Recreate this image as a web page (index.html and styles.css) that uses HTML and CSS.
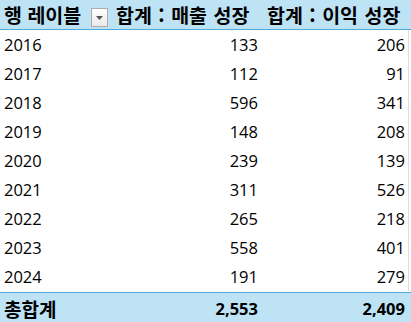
FILE: index.html
```html
<!DOCTYPE html>
<html lang="ko">
<head>
<meta charset="utf-8">
<link rel="stylesheet" href="styles.css">
</head>
<body>
<div class="pivot">
  <div class="row head">
    <div class="cell label">행 레이블<span class="dd"><svg width="7" height="4" viewBox="0 0 7 4"><path d="M0 0H7L3.5 4Z" fill="#555"/></svg></span></div>
    <div class="cell htext">합계 : 매출 성장</div>
    <div class="cell htext">합계 : 이익 성장</div>
  </div>
  <div class="row data"><div class="cell">2016</div><div class="cell num">133</div><div class="cell num">206</div></div>
  <div class="row data"><div class="cell">2017</div><div class="cell num">112</div><div class="cell num">91</div></div>
  <div class="row data"><div class="cell">2018</div><div class="cell num">596</div><div class="cell num">341</div></div>
  <div class="row data"><div class="cell">2019</div><div class="cell num">148</div><div class="cell num">208</div></div>
  <div class="row data"><div class="cell">2020</div><div class="cell num">239</div><div class="cell num">139</div></div>
  <div class="row data"><div class="cell">2021</div><div class="cell num">311</div><div class="cell num">526</div></div>
  <div class="row data"><div class="cell">2022</div><div class="cell num">265</div><div class="cell num">218</div></div>
  <div class="row data"><div class="cell">2023</div><div class="cell num">558</div><div class="cell num">401</div></div>
  <div class="row data"><div class="cell">2024</div><div class="cell num">191</div><div class="cell num">279</div></div>
  <div class="row total"><div class="cell">총합계</div><div class="cell num">2,553</div><div class="cell num">2,409</div></div>
</div>
</body>
</html>
```
FILE: styles.css
```css
html, body {
  margin: 0;
  padding: 0;
  background: #ffffff;
}
.pivot {
  width: 411px;
  font-family: "Open Sans", "Noto Sans CJK KR", sans-serif;
  font-size: 16.5px;
  color: #000;
}
.row {
  display: grid;
  grid-template-columns: 112px 150px 146px 3px;
  align-items: center;
}
.cell {
  padding: 0 4px 0 4px;
  white-space: nowrap;
  overflow: visible;
}
.num {
  text-align: right;
}
.row .cell:nth-child(3) {
  padding-right: 3px;
}
.head {
  height: 29px;
  background: #bee3f5;
  border-bottom: 1px solid #4ea9dd;
  font-family: "Noto Sans CJK KR", sans-serif;
  font-weight: 700;
  font-size: 19.5px;
}
.head .label {
  display: flex;
  align-items: center;
  gap: 10px;
}
.head .htext {
  text-align: left;
  word-spacing: 1px;
}
.head .htext:nth-child(3) {
  padding-left: 5px;
}
.dd {
  display: inline-flex;
  align-items: center;
  justify-content: center;
  width: 18px;
  height: 19px;
  border: 1px solid #ababab;
  background: linear-gradient(#ffffff, #e9e9e9);
  box-sizing: border-box;
  padding-top: 1px;
  margin-top: 5px;
}
.data {
  height: 29px;
  width: 409px;
  box-sizing: border-box;
  border-right: 1px solid #dadada;
}
.total {
  height: 31px;
  background: #bee3f5;
  border-top: 1px solid #4ea9dd;
  font-weight: 700;
  margin-top: 1px;
}
.total .cell:first-child {
  font-family: "Noto Sans CJK KR", sans-serif;
  font-size: 19px;
}
```
